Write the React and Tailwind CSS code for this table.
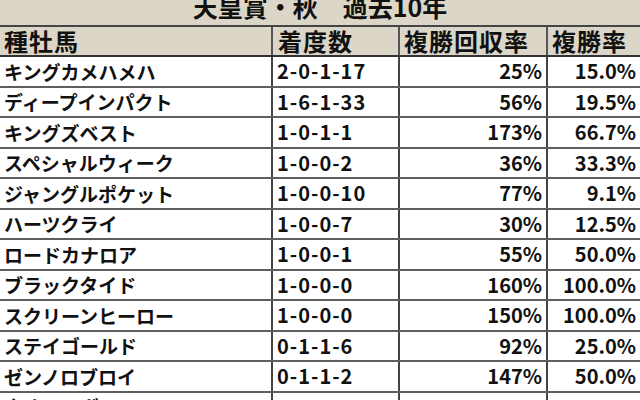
import React from 'react';

const rows = [
  { sire: 'キングカメハメハ', rec: '2-0-1-17', ret: '25%', rate: '15.0%' },
  { sire: 'ディープインパクト', rec: '1-6-1-33', ret: '56%', rate: '19.5%' },
  { sire: 'キングズベスト', rec: '1-0-1-1', ret: '173%', rate: '66.7%' },
  { sire: 'スペシャルウィーク', rec: '1-0-0-2', ret: '36%', rate: '33.3%' },
  { sire: 'ジャングルポケット', rec: '1-0-0-10', ret: '77%', rate: '9.1%' },
  { sire: 'ハーツクライ', rec: '1-0-0-7', ret: '30%', rate: '12.5%' },
  { sire: 'ロードカナロア', rec: '1-0-0-1', ret: '55%', rate: '50.0%' },
  { sire: 'ブラックタイド', rec: '1-0-0-0', ret: '160%', rate: '100.0%' },
  { sire: 'スクリーンヒーロー', rec: '1-0-0-0', ret: '150%', rate: '100.0%' },
  { sire: 'ステイゴールド', rec: '0-1-1-6', ret: '92%', rate: '25.0%' },
  { sire: 'ゼンノロブロイ', rec: '0-1-1-2', ret: '147%', rate: '50.0%' },
  { sire: 'ネオユニヴァース', rec: '', ret: '', rate: '' },
];

const font = { fontFamily: '"Noto Sans CJK JP", "Noto Sans", sans-serif' };

const App = () => {
  return (
    <div
      className="w-[640px] h-[400px] overflow-hidden bg-[#dbd6c8] text-[#111]"
      style={font}
    >
      {/* Title */}
      <div className="h-[27px] overflow-hidden flex justify-center border-b-2 border-[#444]">
        <span className="text-[25px] leading-none font-bold -mt-[6px]">
          天皇賞・秋　過去10年
        </span>
      </div>

      {/* Header row */}
      <div className="grid grid-cols-[273px_127px_148px_92px] h-[30px] border-b-2 border-[#333] text-[24px] font-bold leading-none tracking-[1px]">
        <div className="border-r-2 border-[#555] pl-[4px] flex items-center">種牡馬</div>
        <div className="border-r-2 border-[#555] pl-[5px] flex items-center">着度数</div>
        <div className="border-r-2 border-[#555] pl-[4px] flex items-center">複勝回収率</div>
        <div className="pl-[4px] flex items-center">複勝率</div>
      </div>

      {/* Body */}
      <div className="bg-white">
        {rows.map((r) => (
          <div
            key={r.sire}
            className="grid grid-cols-[273px_127px_148px_92px] h-[30.5px] border-b-2 border-[#5e5e5e] text-[20px] font-semibold leading-none"
          >
            <div className="border-r-2 border-[#444] pl-[4px] flex items-center whitespace-nowrap text-[19px]">
              {r.sire}
            </div>
            <div className="border-r-2 border-[#444] pl-[4px] flex items-center tracking-[1px]">
              {r.rec}
            </div>
            <div className="border-r-2 border-[#444] pr-[4px] flex items-center justify-end">
              {r.ret}
            </div>
            <div className="pr-[4px] flex items-center justify-end">{r.rate}</div>
          </div>
        ))}
      </div>
    </div>
  );
};

export default App;
